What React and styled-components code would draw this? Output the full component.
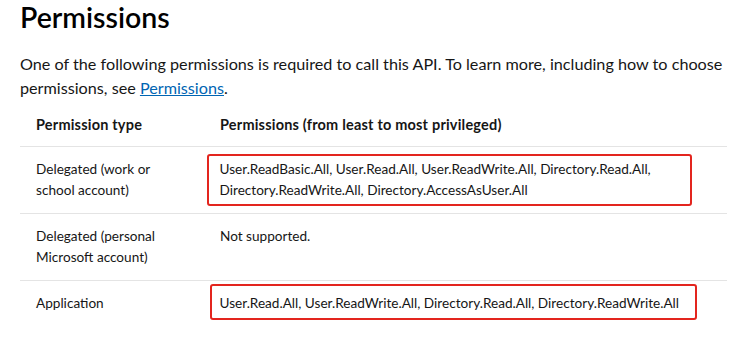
import React from "react";
import styled, { createGlobalStyle } from "styled-components";

const GlobalStyle = createGlobalStyle`
  body {
    margin: 0;
    background: #ffffff;
    font-family: "Lato", "Noto Sans", sans-serif;
    color: #161616;
  }
`;

const Page = styled.div`
  width: 747px;
  height: 350px;
  overflow: hidden;
  padding: 0 20px;
  box-sizing: border-box;
`;

const Title = styled.h2`
  margin: 0;
  font-size: 28.5px;
  line-height: 34px;
  font-weight: 600;
  color: #000000;
`;

const Intro = styled.p`
  margin: 18px 0 0 0;
  font-size: 16.2px;
  line-height: 24px;
`;

const Link = styled.a`
  color: #0065b3;
  text-decoration: underline;
`;

const Table = styled.table`
  margin-top: 4px;
  width: 707px;
  border-collapse: collapse;
  font-size: 13.6px;
  line-height: 21px;
`;

const HeadCell = styled.th`
  text-align: left;
  font-weight: 700;
  font-size: 14.5px;
  letter-spacing: 0.2px;
  padding: 10px ${(props) => (props.first ? "30px" : "16px")} 11px 16px;
  border-bottom: 1px solid #e4e4e4;
  width: ${(props) => (props.first ? "138px" : "auto")};
`;

const Row = styled.tr`
  border-bottom: ${(props) => (props.last ? "none" : "1px solid #e4e4e4")};
`;

const Cell = styled.td`
  vertical-align: top;
  padding: 12px ${(props) => (props.first ? "30px" : "16px")} 12px 16px;
`;

// red annotation box drawn round a cell's text; offsets differ per box
const Highlight = styled.div`
  margin: ${(p) => `-${p.box.top}px ${p.box.right}px -${p.box.bottom}px -${p.box.left}px`};
  padding: ${(p) => `${p.box.top - 2.5}px ${p.box.pr}px ${p.box.bottom - 2.5}px ${p.box.left - 2.5}px`};
  border: 2.5px solid #e3251e;
  border-radius: 3px;
  white-space: ${(p) => (p.box.nowrap ? "nowrap" : "normal")};
`;

const rows = [
  {
    type: "Delegated (work or school account)",
    perms:
      "User.ReadBasic.All, User.Read.All, User.ReadWrite.All, Directory.Read.All, Directory.ReadWrite.All, Directory.AccessAsUser.All",
    box: { top: 5, bottom: 6, left: 13, right: 19, pr: 8 },
  },
  {
    type: "Delegated (personal Microsoft account)",
    perms: "Not supported.",
  },
  {
    type: "Application",
    perms:
      "User.Read.All, User.ReadWrite.All, Directory.Read.All, Directory.ReadWrite.All",
    box: { top: 9, bottom: 7, left: 10, right: 14, pr: 2, nowrap: true },
  },
];

export default function App() {
  return (
    <Page>
      <GlobalStyle />
      <Title>Permissions</Title>
      <Intro>
        One of the following permissions is required to call this API. To learn
        more, including how to choose permissions, see{" "}
        <Link href="#">Permissions</Link>.
      </Intro>
      <Table>
        <thead>
          <tr>
            <HeadCell first>Permission type</HeadCell>
            <HeadCell>Permissions (from least to most privileged)</HeadCell>
          </tr>
        </thead>
        <tbody>
          {rows.map((r, i) => (
            <Row key={r.type} last={i === rows.length - 1}>
              <Cell first>{r.type}</Cell>
              <Cell>
                {r.box ? <Highlight box={r.box}>{r.perms}</Highlight> : r.perms}
              </Cell>
            </Row>
          ))}
        </tbody>
      </Table>
    </Page>
  );
}
